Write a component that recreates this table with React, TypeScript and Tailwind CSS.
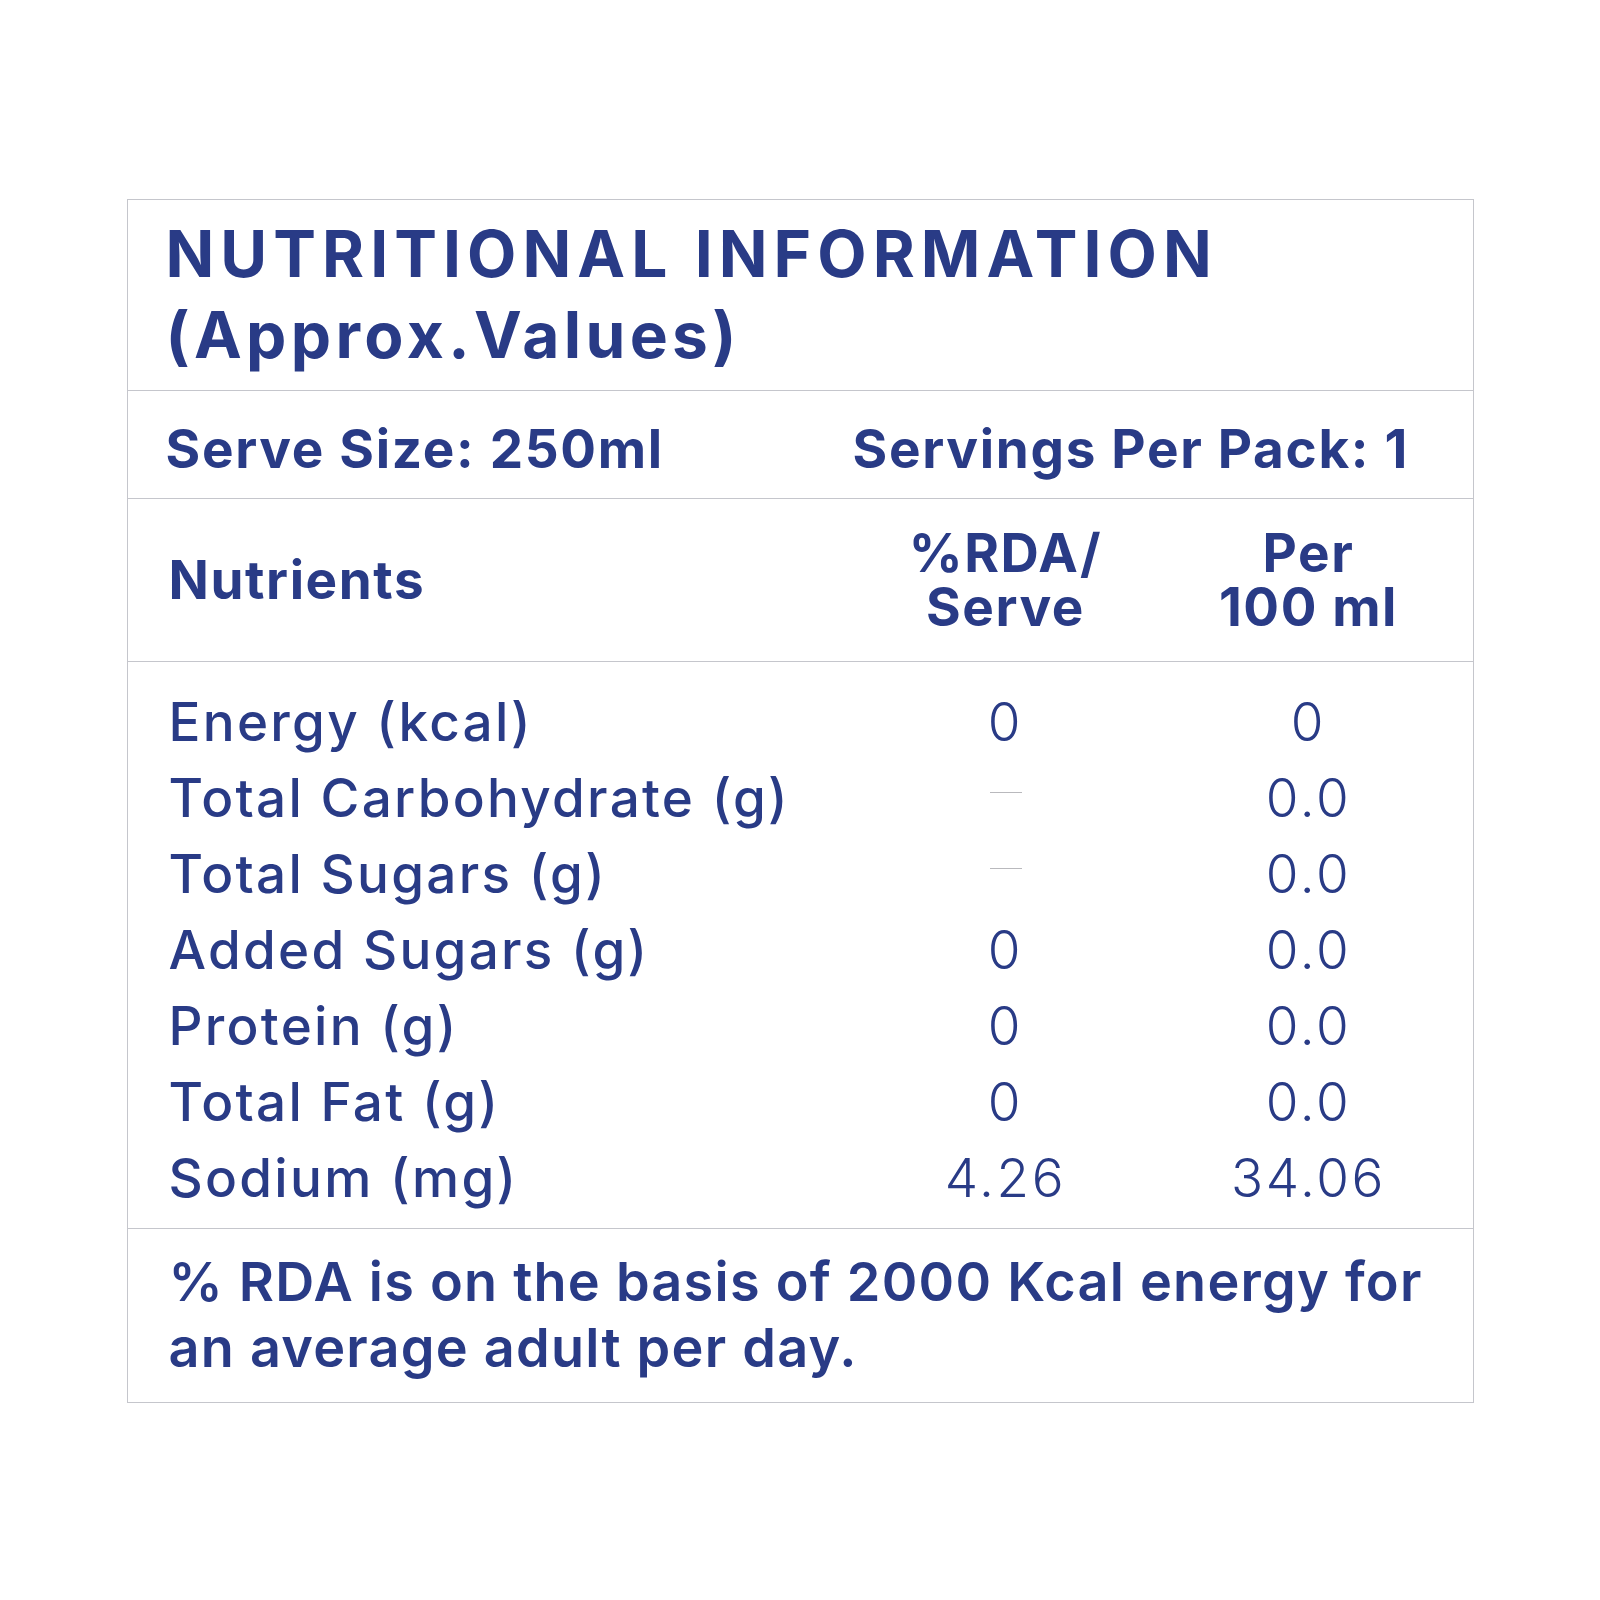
import React from 'react';

const rows = [
  { name: 'Energy (kcal)', rda: '0', per100: '0' },
  { name: 'Total Carbohydrate (g)', rda: null, per100: '0.0' },
  { name: 'Total Sugars (g)', rda: null, per100: '0.0' },
  { name: 'Added Sugars (g)', rda: '0', per100: '0.0' },
  { name: 'Protein (g)', rda: '0', per100: '0.0' },
  { name: 'Total Fat (g)', rda: '0', per100: '0.0' },
  { name: 'Sodium (mg)', rda: '4.26', per100: '34.06' },
];

const grid = 'grid grid-cols-[687px_300px_306px]';

export default function App() {
  return (
    <div className="min-h-[1600px] bg-white pt-[199px] font-['Inter',sans-serif] text-[#293b86]">
      <div className="mx-auto w-[1347px] border border-[#c5c6cc]">
        {/* Title */}
        <div className="h-[191px] border-b border-[#c5c6cc] pl-[38px] pt-[13px]">
          <h1 className="text-[64px] font-bold leading-[81px]">
            <span className="block tracking-[0.095em]">NUTRITIONAL INFORMATION</span>
            <span className="block tracking-[0.068em]">(Approx.Values)</span>
          </h1>
        </div>

        {/* Serve size */}
        <div className={`${grid} h-[108px] items-center border-b border-[#c5c6cc] pl-[38px] pt-[10px] text-[53px] font-bold tracking-[0.032em]`}>
          <span>Serve Size: 250ml</span>
          <span className="col-span-2">Servings Per Pack: 1</span>
        </div>

        {/* Column headers */}
        <div className={`${grid} h-[163px] items-center border-b border-[#c5c6cc] pl-[41px] text-[53px] font-bold leading-[54px] tracking-[0.03em]`}>
          <span>Nutrients</span>
          <span className="text-center">
            %RDA/
            <br />
            Serve
          </span>
          <span className="text-center">
            Per
            <br />
            100 ml
          </span>
        </div>

        {/* Rows */}
        <div className="border-b border-[#c5c6cc] pl-[41px] pt-[22px] pb-[12px]">
          {rows.map((row) => (
            <div key={row.name} className={`${grid} h-[76px] items-center text-[53px] leading-[76px]`}>
              <span className="font-medium tracking-[0.043em]">{row.name}</span>
              <span className="flex justify-center font-light tracking-[0.05em]">
                {row.rda === null ? <span className="mt-[-6px] block h-px w-[32px] bg-[#b9b9bd]" /> : row.rda}
              </span>
              <span className="text-center font-light tracking-[0.05em]">{row.per100}</span>
            </div>
          ))}
        </div>

        {/* Footer */}
        <div className="h-[173px] pl-[41px] pt-[20px]">
          <p className="text-[54px] font-semibold leading-[66px] tracking-[0.023em]">
            % RDA is on the basis of 2000 Kcal energy for
            <br />
            an average adult per day.
          </p>
        </div>
      </div>
    </div>
  );
}
